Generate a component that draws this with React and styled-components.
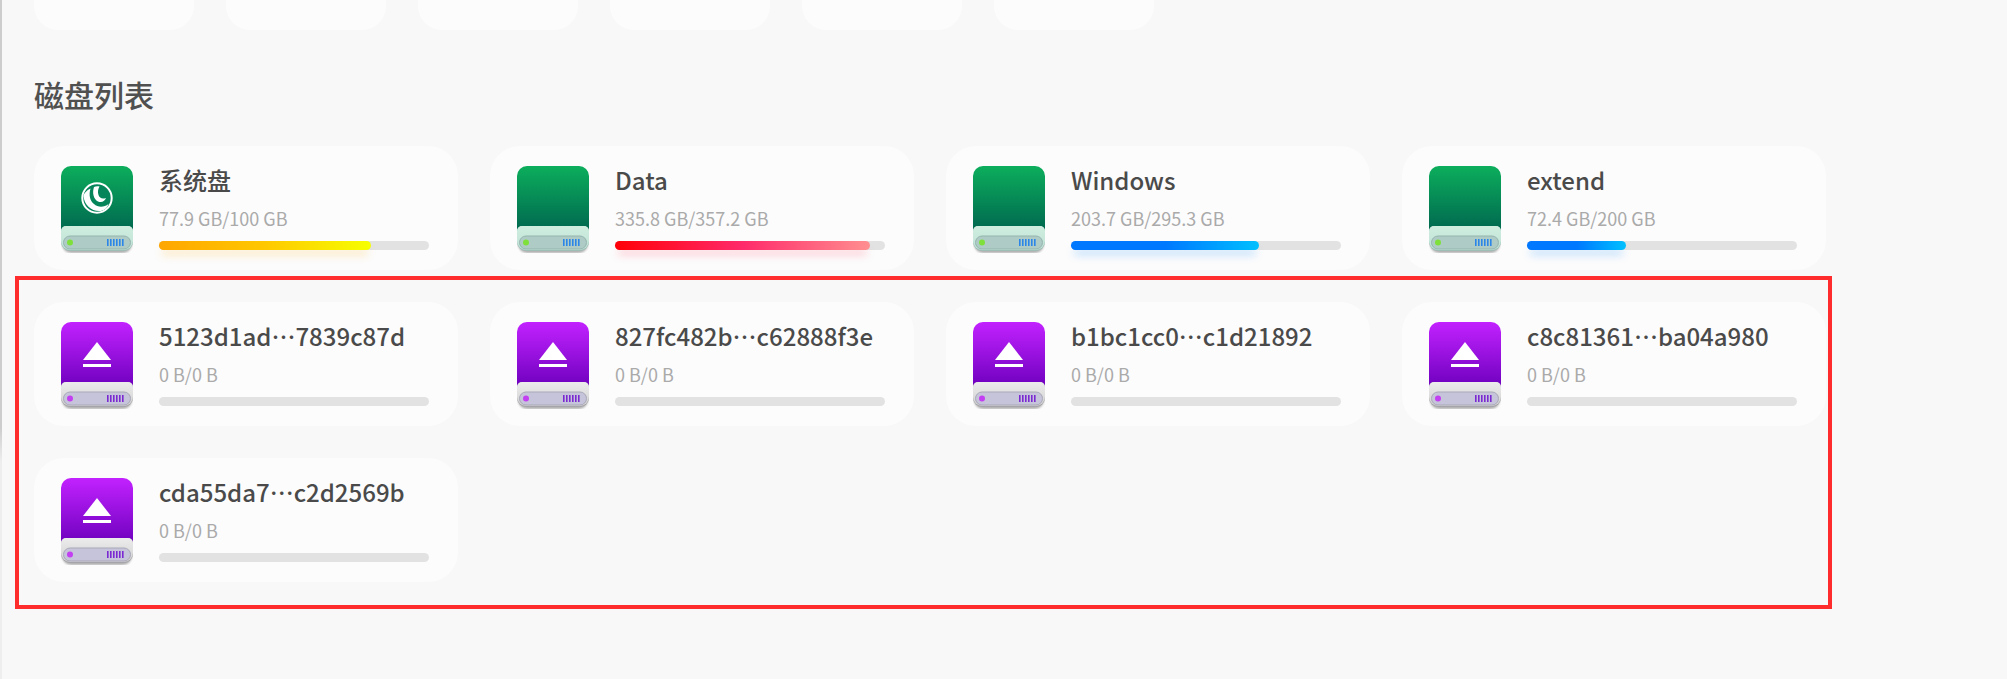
import React from 'react'
import styled, { createGlobalStyle } from 'styled-components'

const GlobalStyle = createGlobalStyle`
    html, body {
        margin: 0;
        padding: 0;
        background: #f8f8f8;
    }
    body {
        font-family: "Noto Sans CJK SC", "Noto Sans", sans-serif;
    }
`

const Page = styled.div`
    display: flex;
    width: 2007px;
    height: 679px;
    overflow: hidden;
`

const Rail = styled.div`
    width: 2px;
    height: 679px;
    background: linear-gradient(180deg, #cdcdcd 0%, #cdcdcd 63%, #eeeeee 68%, #eeeeee 100%);
    flex-shrink: 0;
`

const Main = styled.main`
    position: relative;
    flex: 1;
    padding-left: 32px;
`

const TopRow = styled.div`
    display: flex;
    align-items: flex-end;
    gap: 32px;
    height: 30px;
    overflow: hidden;
`

const TopCard = styled.div`
    width: 160px;
    height: 124px;
    flex-shrink: 0;
    background: #fcfcfc;
    border-radius: 24px;
`

const Heading = styled.h2`
    margin: 44px 0 32px;
    height: 40px;
    font-size: 30px;
    line-height: 40px;
    font-weight: 500;
    color: #505050;
`

const DiskGrid = styled.div`
    display: grid;
    grid-template-columns: repeat(4, 424px);
    grid-auto-rows: 124px;
    gap: 32px;
`

const Card = styled.div`
    display: flex;
    gap: 26px;
    padding: 20px 29px 0 27px;
    box-sizing: border-box;
    background: #fcfcfc;
    border-radius: 30px;
`

const DriveIcon = styled.svg`
    width: 72px;
    height: 87px;
    flex-shrink: 0;
    display: block;
`

const Info = styled.div`
    flex: 1;
    min-width: 0;
    display: flex;
    flex-direction: column;
`

const Name = styled.div`
    height: 28px;
    font-size: 24px;
    line-height: 28px;
    font-weight: 500;
    color: #4a4a4a;
    white-space: nowrap;
`

const Usage = styled.div`
    margin-top: 11px;
    height: 26px;
    font-size: 18px;
    line-height: 26px;
    color: #aaaaaa;
`

const Track = styled.div`
    margin-top: 10px;
    height: 9px;
    background: #e2e2e2;
    border-radius: 5px;
`

const Fill = styled.div`
    height: 100%;
    border-radius: 5px;
    background: linear-gradient(90deg, ${p => p.$from}, ${p => p.$mid || p.$from}, ${p => p.$to});
    box-shadow: 0 7px 9px -3px ${p => p.$glow};
`

const Highlight = styled.div`
    position: absolute;
    left: 13px;
    top: 276px;
    width: 1817px;
    height: 333px;
    box-sizing: border-box;
    border: 4px solid #ff2c2e;
    pointer-events: none;
`

const themes = {
    green: {
        top: '#0cae5c', bottom: '#00664f', trayTop: '#cfeee0', trayBottom: '#bfe2d5',
        pill: '#aecbc5', pillEdge: '#95b5af', led: '#7fe03c', bars: '#2c86e8', edge: '#9dbdb5',
    },
    purple: {
        top: '#c222ff', bottom: '#6d00bd', trayTop: '#ececec', trayBottom: '#d2d2d2',
        pill: '#c6c4da', pillEdge: '#a9a8b8', led: '#c23ff2', bars: '#7b2ad2', edge: '#a4a4aa',
    },
}

const Drive = ({ id, kind, mark }) => {
    const t = themes[kind]
    return (
        <DriveIcon viewBox="0 0 72 87" aria-hidden="true">
            <defs>
                <linearGradient id={`body-${id}`} x1="0" y1="0" x2="0" y2="1">
                    <stop offset="0" stopColor={t.top} />
                    <stop offset="1" stopColor={t.bottom} />
                </linearGradient>
                <linearGradient id={`tray-${id}`} x1="0" y1="0" x2="0" y2="1">
                    <stop offset="0" stopColor={t.trayTop} />
                    <stop offset="1" stopColor={t.trayBottom} />
                </linearGradient>
                <filter id={`soft-${id}`} x="-20%" y="-20%" width="140%" height="140%">
                    <feGaussianBlur stdDeviation="1.3" />
                </filter>
            </defs>
            <rect x="1" y="62" width="70" height="25" rx="9" fill="#000" opacity="0.3" filter={`url(#soft-${id})`} />
            <path d="M10 0H62A10 10 0 0 1 72 10V66H0V10A10 10 0 0 1 10 0Z" fill={`url(#body-${id})`} />
            <path d="M0 65A5 5 0 0 1 5 60H67A5 5 0 0 1 72 65V76A9 9 0 0 1 63 85H9A9 9 0 0 1 0 76Z" fill={t.edge} />
            <path d="M0 65A5 5 0 0 1 5 60H67A5 5 0 0 1 72 65V75A9 9 0 0 1 63 84H9A9 9 0 0 1 0 75Z" fill={`url(#tray-${id})`} />
            <rect x="2.5" y="70" width="67" height="13" rx="6.5" fill={t.pill} stroke={t.pillEdge} strokeWidth="1" />
            <circle cx="9" cy="76.5" r="3" fill={t.led} />
            <g fill={t.bars}>
                {[46, 49, 52, 55, 58, 61].map(x => <rect key={x} x={x} y="73" width="1.6" height="7" />)}
            </g>
            {mark === 'eject' && (
                <g fill="#fff">
                    <path d="M36 20L50 38H22Z" />
                    <rect x="22" y="42" width="28" height="3" />
                </g>
            )}
            {mark === 'deepin' && (
                <g>
                    <circle cx="36" cy="32" r="14.7" fill="#07855a" stroke="#fff" strokeWidth="2" />
                    <path d="M22.5 30C23 39 31 46 40 45C44 44 46.5 41.5 47.5 38C43 41.5 37 41.5 33 38C29 35 27.5 29 29.5 22.5C25.5 24.5 23 27 22.5 30Z" fill="#fff" />
                    <path d="M33 21C31 27 32.5 33 37 35.5C41 37 44 35 45 32C41 33.5 38.5 32 37.5 29C36.5 26 37 23 38.5 20.5C36.5 20 34.5 20.3 33 21Z" fill="#fff" />
                </g>
            )}
        </DriveIcon>
    )
}

const disks = [
    { id: 'sys', name: '系统盘', usage: '77.9 GB/100 GB', pct: 78.5, kind: 'green', mark: 'deepin', from: '#ffa600', mid: '#ffc800', to: '#f6ff00', glow: 'rgba(255,170,0,.45)' },
    { id: 'data', name: 'Data', usage: '335.8 GB/357.2 GB', pct: 94.5, kind: 'green', from: '#ff0008', mid: '#ff2a6a', to: '#ff8f90', glow: 'rgba(255,30,70,.4)' },
    { id: 'win', name: 'Windows', usage: '203.7 GB/295.3 GB', pct: 69.5, kind: 'green', from: '#0078ff', to: '#00c0ff', glow: 'rgba(0,130,255,.45)' },
    { id: 'ext', name: 'extend', usage: '72.4 GB/200 GB', pct: 36.5, kind: 'green', from: '#0078ff', to: '#00c0ff', glow: 'rgba(0,130,255,.45)' },
    { id: 'a', name: '5123d1ad…7839c87d', usage: '0 B/0 B', pct: 0, kind: 'purple', mark: 'eject' },
    { id: 'b', name: '827fc482b…c62888f3e', usage: '0 B/0 B', pct: 0, kind: 'purple', mark: 'eject' },
    { id: 'c', name: 'b1bc1cc0…c1d21892', usage: '0 B/0 B', pct: 0, kind: 'purple', mark: 'eject' },
    { id: 'd', name: 'c8c81361…ba04a980', usage: '0 B/0 B', pct: 0, kind: 'purple', mark: 'eject' },
    { id: 'e', name: 'cda55da7…c2d2569b', usage: '0 B/0 B', pct: 0, kind: 'purple', mark: 'eject' },
]

const App = () => {
    return (
        <Page lang="zh-CN">
            <GlobalStyle />
            <Rail />
            <Main>
                <TopRow>
                    {[1, 2, 3, 4, 5, 6].map(n => <TopCard key={n} />)}
                </TopRow>
                <Heading>磁盘列表</Heading>
                <DiskGrid>
                    {disks.map(d => (
                        <Card key={d.id}>
                            <Drive id={d.id} kind={d.kind} mark={d.mark} />
                            <Info>
                                <Name>{d.name}</Name>
                                <Usage>{d.usage}</Usage>
                                <Track>
                                    {d.pct > 0 && (
                                        <Fill
                                            $from={d.from}
                                            $mid={d.mid}
                                            $to={d.to}
                                            $glow={d.glow}
                                            style={{ width: `${d.pct}%` }}
                                        />
                                    )}
                                </Track>
                            </Info>
                        </Card>
                    ))}
                </DiskGrid>
                <Highlight />
            </Main>
        </Page>
    )
}

export default App
